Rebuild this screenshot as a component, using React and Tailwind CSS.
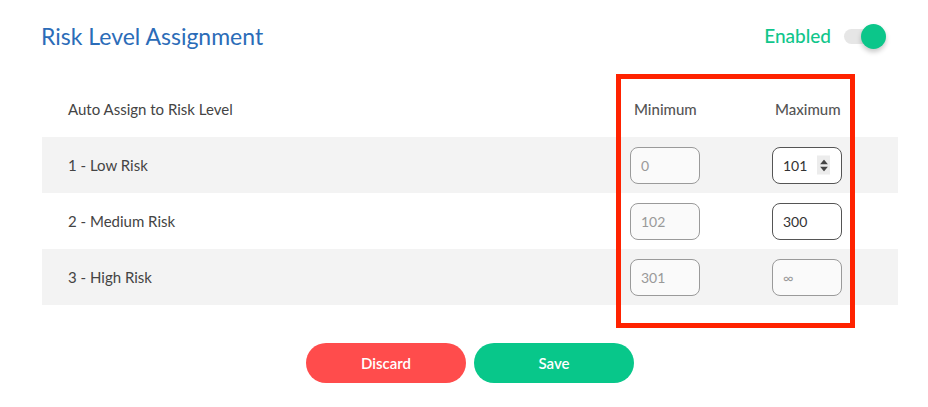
import { useState } from 'react'

const rows = [
  { id: 1, label: '1 - Low Risk', min: '0', max: '101', maxEditable: true, spinner: true, shaded: true },
  { id: 2, label: '2 - Medium Risk', min: '102', max: '300', maxEditable: true, shaded: false },
  { id: 3, label: '3 - High Risk', min: '301', max: '∞', maxEditable: false, shaded: true },
]

function Spinner() {
  return (
    <div className="absolute right-[11px] top-1/2 -translate-y-1/2 w-[13px] h-[19px] bg-[#ececec] flex flex-col items-center justify-center gap-[2px]">
      <svg width="8" height="5" viewBox="0 0 8 5"><path d="M4 0 L8 5 L0 5 Z" fill="#444" /></svg>
      <svg width="8" height="5" viewBox="0 0 8 5"><path d="M0 0 L8 0 L4 5 Z" fill="#444" /></svg>
    </div>
  )
}

function NumberBox({ value, editable, spinner }) {
  return (
    <div className={`relative w-[70px] h-[37px] rounded-[8px] border flex items-center pl-[10px] text-[14px] ${editable ? 'border-[#555] bg-white text-[#333]' : 'border-[#9a9a9a] bg-[#fafafa] text-[#999]'}`}>
      <span>{value}</span>
      {spinner && <Spinner />}
    </div>
  )
}

export default function App() {
  const [enabled, setEnabled] = useState(true)

  return (
    <div className="relative w-[928px] h-[407px] bg-white font-['Lato',sans-serif] text-[#444]">

      {/* Title + toggle */}
      <div className="flex items-center justify-between h-[72px] pl-[41px] pr-[42px]">
        <h1 className="text-[23px] text-[#2b6cb8]">Risk Level Assignment</h1>
        <div className="flex items-center gap-[13px]">
          <span className="text-[19px] font-medium text-[#10c68b]">Enabled</span>
          <button onClick={() => setEnabled(v => !v)} className="relative w-[42px] h-[25px] flex items-center">
            <span className="block w-[38px] h-[15px] rounded-full bg-[#e6e6e6]" />
            <span className={`absolute top-0 w-[25px] h-[25px] rounded-full bg-[#0cc68a] shadow-[0_3px_5px_rgba(0,0,0,0.22)] ${enabled ? 'left-[17px]' : 'left-0'}`} />
          </button>
        </div>
      </div>

      {/* Table */}
      <div className="mx-[42px] mt-[9px] w-[856px]">
        <div className="flex items-center h-[56px] pl-[26px] pr-[56px] text-[15px]">
          <div className="flex-1">Auto Assign to Risk Level</div>
          <div className="w-[70px] pl-[4px] text-[#555] font-medium whitespace-nowrap">Minimum</div>
          <div className="w-[70px] ml-[72px] pl-[3px] text-[#555] font-medium whitespace-nowrap">Maximum</div>
        </div>
        {rows.map(r => (
          <div key={r.id} className={`flex items-center h-[56px] pl-[26px] pr-[56px] text-[15px] ${r.shaded ? 'bg-[#f3f3f3]' : 'bg-white'}`}>
            <div className="flex-1">{r.label}</div>
            <NumberBox value={r.min} editable={false} />
            <div className="ml-[72px]">
              <NumberBox value={r.max} editable={r.maxEditable} spinner={r.spinner} />
            </div>
          </div>
        ))}
      </div>

      {/* Actions */}
      <div className="flex justify-center gap-[8px] mt-[38px] ml-[12px]">
        <button className="w-[160px] h-[40px] rounded-full bg-[#ff4c4c] text-white text-[15px] font-semibold">Discard</button>
        <button className="w-[160px] h-[40px] rounded-full bg-[#08c78a] text-white text-[15px] font-semibold">Save</button>
      </div>

      {/* Highlight annotation */}
      <div className="absolute left-[616px] top-[74px] w-[239px] h-[254px] border-[5px] border-[#ff2200] pointer-events-none" />
    </div>
  )
}
